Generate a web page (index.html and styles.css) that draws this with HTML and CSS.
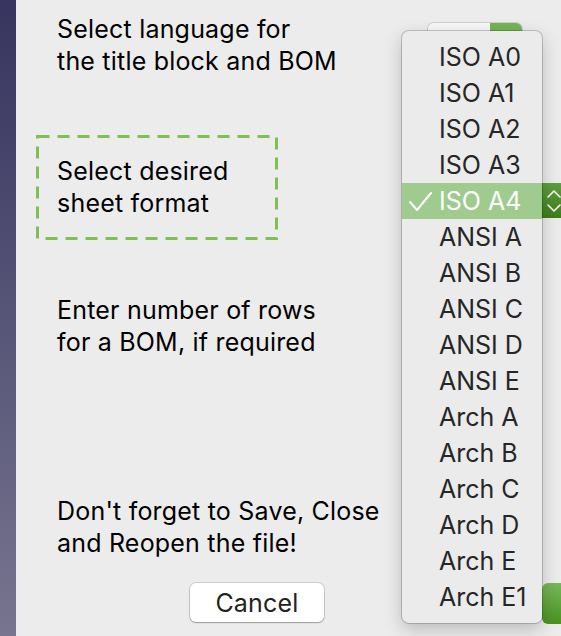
FILE: index.html
```html
<!DOCTYPE html>
<html>
<head>
<meta charset="utf-8">
<link rel="stylesheet" href="styles.css">
</head>
<body>
<div class="sidebar"></div>
<div class="panel">
  <div class="row row-lang">
    <div class="left"><p class="label">Select language for<br>the title block and BOM</p></div>
    <div class="popup-btn"><span class="popup-face"></span><span class="popup-arrow"></span></div>
  </div>
  <div class="row row-format">
    <div class="left">
      <div class="dashed">
        <p class="label inbox">Select desired<br>sheet format</p>
      </div>
    </div>
    <div class="stepper-btn">
      <span class="stepper-face"></span>
      <span class="stepper-arrow">
        <svg width="16" height="26" viewBox="0 0 16 26"><path d="M2 9 L8 3 L14 9 M2 17 L8 23 L14 17" fill="none" stroke="#fff" stroke-width="1.6" stroke-linecap="round" stroke-linejoin="round"/></svg>
      </span>
    </div>
  </div>
  <div class="row row-rows">
    <div class="left"><p class="label">Enter number of rows<br>for a BOM, if required</p></div>
  </div>
  <div class="row row-note">
    <div class="left"><p class="label">Don't forget to Save, Close<br>and Reopen the file!</p></div>
  </div>
  <div class="row row-buttons">
    <button class="btn cancel">Cancel</button>
    <button class="btn ok" aria-label="OK"></button>
  </div>
</div>
<div class="menu">
  <div class="item">ISO A0</div>
  <div class="item">ISO A1</div>
  <div class="item">ISO A2</div>
  <div class="item">ISO A3</div>
  <div class="item selected"><svg class="check" width="26" height="24" viewBox="0 0 26 24"><path d="M2 12 L9 20 L23 3" fill="none" stroke="#fff" stroke-width="2" stroke-linecap="round" stroke-linejoin="round"/></svg>ISO A4</div>
  <div class="item">ANSI A</div>
  <div class="item">ANSI B</div>
  <div class="item">ANSI C</div>
  <div class="item">ANSI D</div>
  <div class="item">ANSI E</div>
  <div class="item">Arch A</div>
  <div class="item">Arch B</div>
  <div class="item">Arch C</div>
  <div class="item">Arch D</div>
  <div class="item">Arch E</div>
  <div class="item">Arch E1</div>
</div>
</body>
</html>
```
FILE: styles.css
```css
html, body {
  margin: 0;
  padding: 0;
}
body {
  width: 561px;
  height: 636px;
  overflow: hidden;
  display: flex;
  background: #ececec;
  font-family: Inter, "Noto Sans", sans-serif;
  position: relative;
}
.sidebar {
  width: 16px;
  flex: none;
  background: linear-gradient(#37345f, #77758f);
}
.panel {
  flex: 1;
  display: flex;
  flex-direction: column;
  padding: 13px 0 0 20px;
  min-width: 0;
}
.row {
  display: flex;
  align-items: flex-start;
}
.left {
  width: 392px;
  flex: none;
}
.label {
  margin: 0 0 0 21px;
  font-size: 25px;
  letter-spacing: 0.2px;
  line-height: 32px;
  color: #000;
  white-space: nowrap;
}
.dashed {
  width: 242px;
  height: 105px;
  box-sizing: border-box;
  background-image: url("data:image/svg+xml;utf8,<svg xmlns='http://www.w3.org/2000/svg' width='242' height='105'><rect x='1.5' y='1.5' width='239' height='102' fill='none' stroke='%237cc152' stroke-width='3' stroke-dasharray='12 8'/></svg>");
  padding: 20px 0 0 0;
}
.label.inbox {
  margin-left: 21px;
}
.row-format { margin-top: 58px; }
.row-rows { margin-top: 54px; }
.row-note { margin-top: 137px; }
.row-buttons { margin-top: 24px; }

.popup-btn {
  margin-top: 10px;
  width: 94px;
  height: 28px;
  display: flex;
  border-radius: 6px;
  overflow: hidden;
  box-shadow: 0 0 0 1px rgba(0,0,0,0.12), 0 1px 1px rgba(0,0,0,0.15);
}
.popup-face {
  flex: 1;
  background: #f7f7f7;
}
.popup-arrow {
  width: 32px;
  background: #74b556;
}
.stepper-btn {
  margin-top: 48px;
  width: 160px;
  height: 35px;
  flex: none;
  display: flex;
  border-radius: 6px;
  overflow: hidden;
}
.stepper-face {
  width: 114px;
  background: #f7f7f7;
}
.stepper-arrow {
  flex: 1;
  background: linear-gradient(#5ea03d, #3d7d1a);
  display: flex;
  align-items: center;
  padding-left: 4px;
}
.btn {
  font-family: Inter, "Noto Sans", sans-serif;
  font-size: 25px;
  letter-spacing: 0.2px;
  border: none;
  padding: 0;
  flex: none;
}
.cancel {
  margin-left: 154px;
  width: 134px;
  height: 39px;
  background: #fff;
  color: #222;
  border-radius: 6px;
  box-shadow: 0 0 0 1px rgba(0,0,0,0.12), 0 1px 1.5px rgba(0,0,0,0.25);
}
.ok {
  margin-left: 218px;
  width: 100px;
  height: 41px;
  color: #fff;
  border-radius: 6px;
  background: linear-gradient(#77b85a, #4b921f);
}
.menu {
  position: absolute;
  left: 402px;
  top: 31px;
  width: 140px;
  height: 592px;
  box-sizing: border-box;
  padding: 8px 0;
  background: #ebebeb;
  border-radius: 7px;
  box-shadow: 0 0 0 1px rgba(0,0,0,0.18), 0 6px 18px rgba(0,0,0,0.22);
}
.item {
  position: relative;
  height: 36px;
  line-height: 36px;
  padding-left: 37px;
  font-size: 25px;
  color: #262626;
  white-space: nowrap;
}
.item.selected {
  background: #9fcb8f;
  color: #fff;
}
.check {
  position: absolute;
  left: 6px;
  top: 7px;
}
```
